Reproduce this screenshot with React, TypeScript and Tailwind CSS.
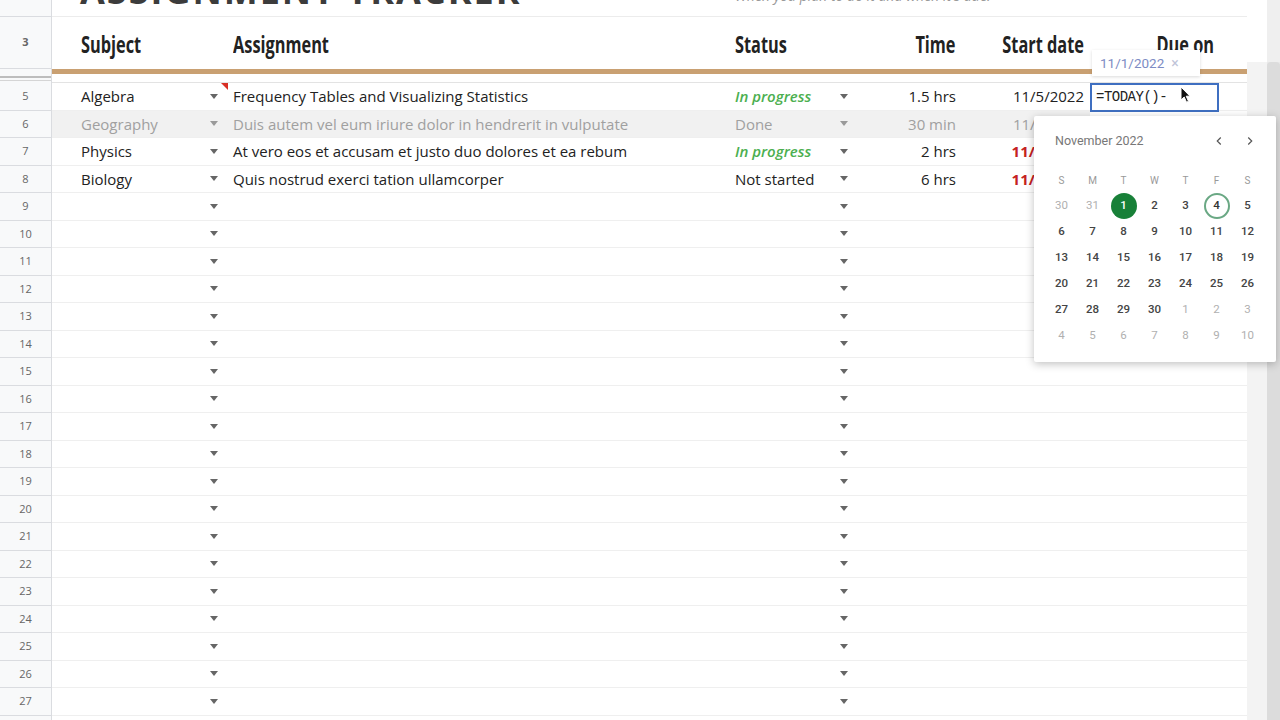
import React from 'react';

type Row = {
  n: number;
  subject?: string;
  assignment?: string;
  status?: string;
  time?: string;
  start?: string;
  done?: boolean;
  late?: boolean;
};

const ROWS: Row[] = [
  { n: 5, subject: 'Algebra', assignment: 'Frequency Tables and Visualizing Statistics', status: 'In progress', time: '1.5 hrs', start: '11/5/2022' },
  { n: 6, subject: 'Geography', assignment: 'Duis autem vel eum iriure dolor in hendrerit in vulputate', status: 'Done', time: '30 min', start: '11/1/2022', done: true },
  { n: 7, subject: 'Physics', assignment: 'At vero eos et accusam et justo duo dolores et ea rebum', status: 'In progress', time: '2 hrs', start: '11/2/2022', late: true },
  { n: 8, subject: 'Biology', assignment: 'Quis nostrud exerci tation ullamcorper', status: 'Not started', time: '6 hrs', start: '11/3/2022', late: true },
];

for (let i = 9; i <= 28; i++) ROWS.push({ n: i });

const GRID = 'grid grid-cols-[52px_20px_153px_500px_132px_108px_125px_128px_29px]';
const BODY = { fontFamily: '"Open Sans", "Liberation Sans", sans-serif' };

const Arrow = ({ light }: { light?: boolean }) => (
  <svg width="8" height="5" viewBox="0 0 8 5" className="shrink-0">
    <path d="M0 0h8L4 5z" fill={light ? '#9a9a9a' : '#666'} />
  </svg>
);

const RowNum = ({ n, h }: { n?: number | string; h: string }) => (
  <div className={`${h} bg-[#f8f9fa] border-r border-b border-[#dadce0] flex items-center justify-center text-[11px] text-[#666]`}>
    {n}
  </div>
);

// condensed header label (no condensed face installed, so squeeze the bold one)
const Head = ({ children, right }: { children: React.ReactNode; right?: boolean }) => (
  <span className={`inline-block whitespace-nowrap scale-x-[0.71] ${right ? 'origin-right' : 'origin-left'}`}>{children}</span>
);

const Calendar = () => {
  const weeks = [
    [30, 31, 1, 2, 3, 4, 5],
    [6, 7, 8, 9, 10, 11, 12],
    [13, 14, 15, 16, 17, 18, 19],
    [20, 21, 22, 23, 24, 25, 26],
    [27, 28, 29, 30, 1, 2, 3],
    [4, 5, 6, 7, 8, 9, 10],
  ];
  return (
    <div className="absolute left-[1034px] top-[116px] w-[242px] h-[246px] bg-white rounded-[2px] shadow-[0_2px_8px_rgba(0,0,0,0.25)] pl-[12px] pr-[13px] pt-[16px]" style={{ fontFamily: '"Roboto", "Liberation Sans", sans-serif' }}>
      <div className="flex items-center h-[18px]">
        <div className="text-[12.5px] text-[#777] pl-[9px] flex-1">November 2022</div>
        <div className="flex gap-[17px] pr-[6px] text-[#555]">
          <svg width="14" height="14" viewBox="0 0 24 24"><path d="M15 6l-6 6 6 6" fill="none" stroke="currentColor" strokeWidth="2" /></svg>
          <svg width="14" height="14" viewBox="0 0 24 24"><path d="M9 6l6 6-6 6" fill="none" stroke="currentColor" strokeWidth="2" /></svg>
        </div>
      </div>
      <div className="grid grid-cols-[repeat(7,31px)] mt-[17px]">
        {['S', 'M', 'T', 'W', 'T', 'F', 'S'].map((d, i) => (
          <div key={i} className="h-[26px] flex items-center justify-center text-[10px] text-[#999]">{d}</div>
        ))}
        {weeks.map((w, wi) =>
          w.map((d, di) => {
            const other = (wi === 0 && d > 20) || (wi >= 4 && d < 15);
            const today = wi === 0 && d === 1;
            const sel = wi === 0 && d === 4;
            return (
              <div key={`${wi}-${di}`} className="h-[26px] flex items-center justify-center">
                <div
                  className={`w-[26px] h-[26px] rounded-full flex items-center justify-center text-[11.5px] ${
                    today
                      ? 'bg-[#188038] text-white font-medium'
                      : sel
                      ? 'border-2 border-[#6aa884] text-[#333] font-medium'
                      : other
                      ? 'text-[#b0b0b0]'
                      : 'text-[#444] font-medium'
                  }`}
                >
                  {d}
                </div>
              </div>
            );
          })
        )}
      </div>
    </div>
  );
};

const App: React.FC = () => {
  return (
    <div className="relative w-[1280px] h-[720px] overflow-hidden bg-white flex" style={BODY}>
      {/* Sheet */}
      <div className="w-[1247px] flex flex-col">
        {/* Row 2 - title (scrolled mostly out of view) */}
        <div className={`${GRID} h-[17px] shrink-0`}>
          <RowNum h="h-[17px]" />
          <div className="col-span-3 h-[17px] overflow-hidden pl-[28px] border-b border-[#ececec]">
            <div className="-mt-[27px] text-[36px] leading-none font-bold tracking-[2px] text-[#3c3c3c] whitespace-nowrap">
              ASSIGNMENT TRACKER
            </div>
          </div>
          <div className="col-span-5 h-[17px] overflow-hidden pl-[10px] border-b border-[#ececec]">
            <div className="-mt-[11px] text-[14px] leading-none italic text-[#999] whitespace-nowrap">When you plan to do it and when it's due.</div>
          </div>
        </div>

        {/* Row 3 - headers */}
        <div className={`${GRID} h-[52px] shrink-0 text-[23px] font-bold text-[#222]`}>
          <RowNum n={3} h="h-[52px]" />
          <div />
          <div className="flex items-center pl-[9px] pt-[3px]"><Head>Subject</Head></div>
          <div className="flex items-center pl-[8px] pt-[3px]"><Head>Assignment</Head></div>
          <div className="flex items-center pl-[10px] pt-[3px]"><Head>Status</Head></div>
          <div className="flex items-center justify-end pr-[9px] pt-[3px]"><Head right>Time</Head></div>
          <div className="flex items-center justify-end pr-[6px] pt-[3px]"><Head right>Start date</Head></div>
          <div className="flex items-center justify-end pr-[4px] pt-[3px]"><Head right>Due on</Head></div>
          <div />
        </div>

        {/* Thick divider */}
        <div className={`${GRID} h-[5px] shrink-0`}>
          <div className="h-[5px] bg-[#f8f9fa] border-r border-[#dadce0]" />
          <div className="col-span-8 bg-[#c9a072]" />
        </div>

        {/* Hidden row 4 */}
        <div className={`${GRID} h-[9px] shrink-0`}>
          <div className="h-[9px] bg-[#f8f9fa] border-r border-[#dadce0] flex flex-col justify-center gap-[2px]">
            <div className="h-[2px] bg-[#bdbdbd]" />
            <div className="h-[1px] bg-[#d5d5d5]" />
          </div>
          <div className="col-span-8 border-b border-[#e3e3e3]" />
        </div>

        {/* Data rows */}
        {ROWS.map((r) => {
          const textColor = r.done ? 'text-[#a0a0a0]' : 'text-[#222]';
          const bg = r.done ? 'bg-[#f1f1f1]' : '';
          return (
            <div key={r.n} className={`${GRID} h-[27.5px] shrink-0 text-[15px] ${textColor}`}>
              <RowNum n={r.n} h="h-[27.5px]" />
              <div className={`${bg} border-b border-[#efefef]`} />
              <div className={`${bg} border-b border-[#efefef] flex items-center justify-between pl-[9px] pr-[7px] whitespace-nowrap`}>
                <span>{r.subject}</span>
                <Arrow light={r.done} />
              </div>
              <div className={`${bg} border-b border-[#efefef] flex items-center pl-[8px] whitespace-nowrap overflow-hidden`}>
                {r.assignment}
              </div>
              <div className={`${bg} border-b border-[#efefef] flex items-center justify-between pl-[10px] pr-[9px] whitespace-nowrap`}>
                <span className={r.status === 'In progress' ? 'italic font-semibold text-[#4caf50]' : ''}>{r.status}</span>
                <Arrow light={r.done} />
              </div>
              <div className={`${bg} border-b border-[#efefef] flex items-center justify-end pr-[9px] whitespace-nowrap`}>
                {r.time}
              </div>
              <div className={`${bg} border-b border-[#efefef] flex items-center justify-end pr-[6px] whitespace-nowrap ${r.late ? 'text-[#c5221f] font-bold' : ''}`}>
                {r.start}
              </div>
              <div className="border-b border-[#efefef]" />
              <div className="border-b border-[#efefef]" />
            </div>
          );
        })}
      </div>

      {/* Right scroll area */}
      <div className="w-[20px] flex flex-col">
        <div className="h-[62px] bg-white" />
        <div className="flex-1 bg-[#f3f3f3]" />
      </div>
      <div className="w-[13px] flex flex-col bg-[#e9e9e9]">
        <div className="h-[62px] bg-[#efefef]" />
        <div className="flex-1 bg-[#dcdcdc] rounded-t-[4px]" />
      </div>

      {/* Comment marker */}
      <svg className="absolute left-[221px] top-[83px]" width="7" height="7" viewBox="0 0 7 7">
        <path d="M0 0h7v7z" fill="#d93025" />
      </svg>

      {/* Formula tooltip */}
      <div className="absolute left-[1092px] top-[50px] w-[108px] h-[26px] bg-white shadow-[0_1px_3px_rgba(0,0,0,0.15)] flex items-center pl-[8px] gap-[7px] text-[13.5px] text-[#7d8cc4]" style={{ fontFamily: '"Roboto", sans-serif' }}>
        <span>11/1/2022</span>
        <span className="text-[#c0c4d8] text-[14px]">×</span>
      </div>

      {/* Cell editor */}
      <div className="absolute left-[1090px] top-[83px] w-[129px] h-[29px] bg-white border-2 border-[#3f6fc1] flex items-center pl-[4px] text-[14px] text-[#222] tracking-[-0.5px]" style={{ fontFamily: '"Liberation Mono", "DejaVu Sans Mono", monospace' }}>
        =TODAY()-
      </div>
      <svg className="absolute left-[1180px] top-[86px]" width="12" height="18" viewBox="0 0 12 18">
        <path d="M1 1v13l3.2-3 2.3 5.2 2-.9-2.3-5.1H10z" fill="#111" stroke="#fff" strokeWidth="1" />
      </svg>

      <Calendar />
    </div>
  );
};

export default App;
